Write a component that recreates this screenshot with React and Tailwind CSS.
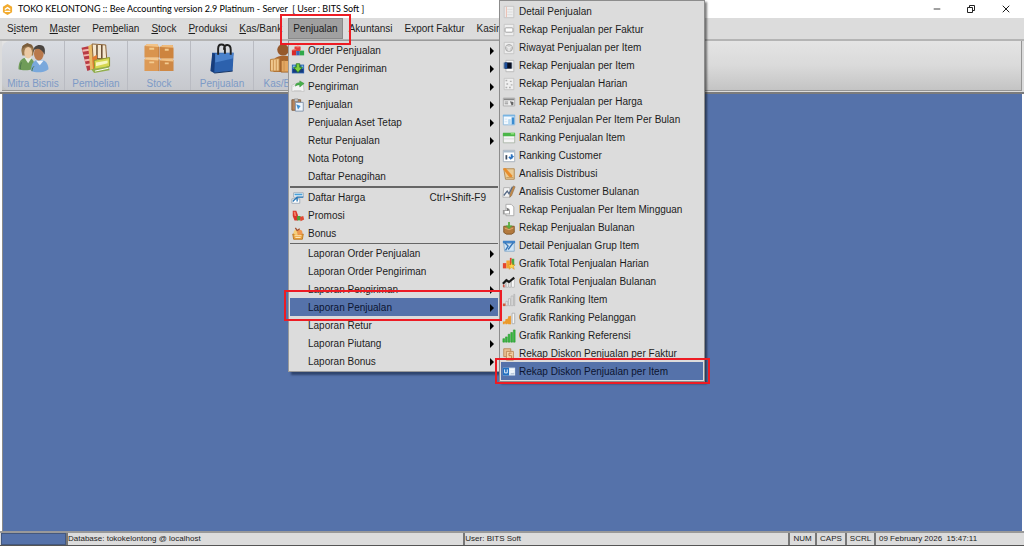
import { Minus, X } from "lucide-react";

const ICONS = {
  cubes: (
    <>
      <path d="M4 3l4-1 3 1v5H4z" fill="#e0403c" />
      <path d="M4 3l4-1 3 1-3 1z" fill="#f58a80" />
      <path d="M1 7h5v6H1z" fill="#d92a2a" />
      <path d="M1 7l1-1h4v1z" fill="#f27a70" />
      <path d="M6 8h4v5H6z" fill="#3b66b8" />
      <path d="M10 8h5v5h-5z" fill="#2fa84a" />
      <path d="M10 8l1-1h4v1z" fill="#7fd08a" />
    </>
  ),
  orderShip: (
    <>
      <path d="M1 3h14v10H1z" fill="#2a5fae" />
      <path d="M2 8h12v4H2z" fill="#173b7c" />
      <path d="M2 4h3v3H2zM12 4h2v3h-2z" fill="#7fc4ee" />
      <path d="M6 2h4v4h3l-5 6-5-6h3z" fill="#7fcf3c" stroke="#2c7d2a" />
    </>
  ),
  ship: (
    <>
      <path d="M1 6l4-2h9l1 9H1z" fill="#f4f4f4" stroke="#c4c4c4" />
      <path d="M2 8l3-3h3M3 12h9" fill="none" stroke="#d0d0d0" />
      <path d="M5 7C5 4 7 3 10 3V1l5 3-5 4V6C8 5 7 6 5 7z" fill="#48b04a" stroke="#2d8833" strokeWidth=".5" />
    </>
  ),
  clipboard: (
    <>
      <path d="M1 2h10v12H1z" fill="#b5835a" stroke="#7c5a3d" />
      <path d="M4 1h4v3H4z" fill="#c9c9c9" stroke="#777" strokeWidth=".6" />
      <path d="M5 5h9v10H5z" fill="#eef4fa" stroke="#7c8fa8" />
      <path d="M6 7l5 2-3 4z" fill="#3f8fd0" />
    </>
  ),
  price: (
    <>
      <path d="M3 2h11v5H3zM1 9h9v5H1z" fill="#fff" stroke="#9aa7b5" />
      <path d="M4 3h9v2H4z" fill="#49a0d8" />
      <path d="M2 12l5-5h7M7 7v5" fill="none" stroke="#2878b8" strokeWidth="1.5" />
    </>
  ),
  promo: (
    <>
      <path d="M2 2h4l2 5v6H4L2 8z" fill="#d8362a" />
      <path d="M3 3h2l1 5H4z" fill="#f4836c" />
      <path d="M7 8h4v5H7z" fill="#4aa03a" />
      <path d="M10 9l4-1 1 4-4 2z" fill="#e04a34" />
    </>
  ),
  bonus: (
    <>
      <path d="M2 8h12l-1 6H3z" fill="#eba23c" stroke="#b87622" />
      <circle cx="6" cy="6" r="3" fill="#f6cf7a" />
      <circle cx="10" cy="6" r="3" fill="#ee9850" />
      <path d="M5 1l2 3 3-2" fill="none" stroke="#a34f2c" strokeWidth="1.5" />
      <path d="M4 10h8M5 12h6" stroke="#fff1cc" />
    </>
  ),
  page: (
    <>
      <path d="M2.500 1.500h11v13h-11z" fill="#eeeeee" stroke="#c4c4c4" />
      <path d="M5 2v12" stroke="#e9b5a5" />
      <path d="M6 5h6M6 8h6M6 11h6" stroke="#dadada" />
    </>
  ),
  field: (
    <>
      <path d="M2.500 1.500h11v13h-11z" fill="#efefef" stroke="#c4c4c4" />
      <rect x="3.500" y="5.500" width="9" height="5" rx="1" fill="#fff" stroke="#999" />
    </>
  ),
  history: (
    <>
      <path d="M2.500 1.500h11v13h-11z" fill="#ededed" stroke="#c4c4c4" />
      <circle cx="8" cy="8" r="4" fill="#d4d4d4" stroke="#a2a2a2" />
      <path d="M5 6l3 2 3-2M8 8v4" fill="none" stroke="#f5f5f5" />
    </>
  ),
  itemDark: (
    <>
      <path d="M4.500 1.500h9v13h-9z" fill="#f7f7f7" stroke="#b7b7b7" />
      <path d="M1 4h11v7H1z" fill="#a5b4c4" />
      <path d="M3 4h8v7H3z" fill="#080f22" />
      <path d="M3 4h3v7H3z" fill="#1b4f9c" />
    </>
  ),
  daily: (
    <>
      <path d="M2.500 1.500h11v13h-11z" fill="#efefef" stroke="#c4c4c4" />
      <path d="M4 4h2M9 5h2M5 8h2M10 9h2M4 12h2M8 12h2" stroke="#b0b0b0" strokeWidth="1.500" />
    </>
  ),
  tag: (
    <>
      <path d="M1.500 3.500h13v9h-13z" fill="#eee" stroke="#aaa" />
      <path d="M2 4h12v2H2z" fill="#888" />
      <path d="M3 8h4M3 10h4" stroke="#888" />
      <path d="M9 7l4 1v3l-2 1z" fill="#666" />
    </>
  ),
  average: (
    <>
      <path d="M1.500 2.500h13v11h-13z" fill="#f4faff" stroke="#8bb8dc" />
      <path d="M1 2h14v2H1z" fill="#78b4e2" />
      <path d="M7 7h3v6H7z" fill="#b9daf2" />
      <path d="M11 5h3v8h-3z" fill="#3a8cd0" />
      <path d="M3 7h3M3 10h3" stroke="#cfe2f2" />
    </>
  ),
  tableGreen: (
    <>
      <path d="M1.500 3.500h13v10h-13z" fill="#f5f5f5" stroke="#a9b5a6" />
      <path d="M1 2h14v4H1z" fill="#4bb648" />
      <path d="M10 2h4v2h-4z" fill="#8ce07c" />
      <path d="M2 9h12" stroke="#d6d6d6" />
    </>
  ),
  rankCustomer: (
    <>
      <path d="M1.500 1.500h13v13h-13z" fill="#fff" stroke="#a0acb8" />
      <path d="M2 2h12v2H2z" fill="#a9bccd" />
      <path d="M4 7h2v5H4z" fill="#3f4c5e" />
      <path d="M11 6v5M8 9l2 2 3-3" fill="none" stroke="#2c72be" strokeWidth="2" />
    </>
  ),
  distribution: (
    <>
      <path d="M2 2h12v12H4z" fill="#eacb96" stroke="#ae834c" />
      <path d="M1 2l3-1 8 9-1 2-3-1z" fill="#e88d2c" />
      <path d="M5 12h8" stroke="#c39a60" />
    </>
  ),
  monthly: (
    <>
      <path d="M2 3h7v11H1z" fill="#f2f2f2" stroke="#b0b0b0" />
      <path d="M2 12l4-5 2 3 4-8" fill="none" stroke="#566985" strokeWidth="1.500" />
      <path d="M13 1l2 1-4 10-2 2v-3z" fill="#c98c46" stroke="#6c563e" strokeWidth=".5" />
    </>
  ),
  weekly: (
    <>
      <path d="M4.500 1.500h6l3 3v10h-9z" fill="#fdfdfd" stroke="#a6a6a6" />
      <path d="M1 8h8v5H1z" fill="#999" />
      <path d="M3 9h5v3H3z" fill="#fff" />
      <path d="M5 5l4 2-3 2z" fill="#777" />
    </>
  ),
  sack: (
    <>
      <path d="M2 6h12v7l-3 2H5l-3-2z" fill="#b37a3e" stroke="#7e5326" />
      <path d="M3 8l5 2 5-2" stroke="#dfb171" fill="none" />
      <path d="M7 1h2v4h3L8 9 4 5h3z" fill="#58ac3c" />
    </>
  ),
  group: (
    <>
      <path d="M1 2h14v3H1z" fill="#3e82c8" />
      <path d="M2 5h12v9H3z" fill="#cfe4f5" stroke="#89acc9" />
      <path d="M3 4l4 4-3 5M13 4L7 12" stroke="#3575b8" strokeWidth="1.500" fill="none" />
    </>
  ),
  chartStar: (
    <>
      <path d="M1 7h4v6H1z" fill="#e5452d" />
      <path d="M5 4h4v9H5z" fill="#f2a42d" />
      <path d="M9 1h2v9H9z" fill="#e5452d" />
      <path d="M11 2h3v8h-3z" fill="#4ca441" />
      <path d="M11 6l1 3h3l-2 2 1 3-3-2-3 2 1-3-2-2h3z" fill="#ffd84a" stroke="#d4861e" strokeWidth=".6" />
    </>
  ),
  chartDark: (
    <>
      <path d="M2 10h2v4H2zM5 8h2v6H5zM8 8h2v6H8zM11 5h3v9h-3z" fill="#fff" stroke="#999" strokeWidth=".6" />
      <path d="M1 10l4-4 3 2 6-5" fill="none" stroke="#181818" strokeWidth="2.500" />
      <path d="M1 11h2v3H1z" fill="#cf5143" />
    </>
  ),
  barsGray: (
    <>
      <path d="M4.500 9.500h2v5h-2zM7.500 6.500h2v8h-2zM10.500 3.500h2v11h-2zM13.500 1.500h1v13h-1z" fill="#f3f3f3" stroke="#a9a9a9" strokeWidth=".8" />
      <path d="M1 12h3v3H1z" fill="#cf5a3e" />
    </>
  ),
  barsOrange: (
    <>
      <path d="M1 12h2v3H1zM4 9h2v6H4zM7 6h3v9H7z" fill="#eb9a2c" />
      <path d="M1 14L10 5v10z" fill="#eb9a2c" />
      <path d="M11.500 2.500h3v12h-3z" fill="#f6f6f6" stroke="#adadad" />
    </>
  ),
  barsGreen: (
    <path d="M1 11h2v4H1zM4 9h2v6H4zM7 6h2v9H7zM10 4h2v11h-2zM13 1h2v14h-2z" fill="#35bb3c" stroke="#24932c" strokeWidth=".6" />
  ),
  discount: (
    <>
      <path d="M2 2h8v9H2z" fill="#eac193" stroke="#b98452" />
      <path d="M5 5h8v10H5z" fill="#f4d4ab" stroke="#b98452" />
      <path d="M11 7H8v3h3v3H7" fill="none" stroke="#b5763c" />
    </>
  ),
  discountItem: (
    <>
      <path d="M1 3h14v9H1z" fill="#dfeaf5" />
      <path d="M1 3h7v9H1z" fill="#2371c2" />
      <path d="M3 5v4h3V5M9 5h5M9 7h5M9 9h4" fill="none" stroke="#fff" />
      <path d="M10 10h4" stroke="#9fb4cc" />
    </>
  ),
};

const MENUS = [
  { before: "S", key: "i", after: "stem" },
  { before: "", key: "M", after: "aster" },
  { before: "Pem", key: "b", after: "elian" },
  { before: "", key: "S", after: "tock" },
  { before: "", key: "P", after: "roduksi" },
  { before: "", key: "K", after: "as/Bank" },
];

const SALES_MENU = [
  { label: "Order Penjualan", icon: "cubes", sub: true },
  { label: "Order Pengiriman", icon: "orderShip", sub: true },
  { label: "Pengiriman", icon: "ship", sub: true },
  { label: "Penjualan", icon: "clipboard", sub: true },
  { label: "Penjualan Aset Tetap", sub: true },
  { label: "Retur Penjualan", sub: true },
  { label: "Nota Potong" },
  { label: "Daftar Penagihan" },
  { line: "thick" },
  { label: "Daftar Harga", icon: "price", shortcut: "Ctrl+Shift-F9" },
  { label: "Promosi", icon: "promo" },
  { label: "Bonus", icon: "bonus" },
  { line: "thin" },
  { label: "Laporan Order Penjualan", sub: true },
  { label: "Laporan Order Pengiriman", sub: true },
  { label: "Laporan Pengiriman", sub: true },
  { label: "Laporan Penjualan", sub: true, active: true },
  { label: "Laporan Retur", sub: true },
  { label: "Laporan Piutang", sub: true },
  { label: "Laporan Bonus", sub: true },
];

const REPORT_MENU = [
  { label: "Detail Penjualan", icon: "page" },
  { label: "Rekap Penjualan per Faktur", icon: "field" },
  { label: "Riwayat Penjualan per Item", icon: "history" },
  { label: "Rekap Penjualan per Item", icon: "itemDark" },
  { label: "Rekap Penjualan Harian", icon: "daily" },
  { label: "Rekap Penjualan per Harga", icon: "tag" },
  { label: "Rata2 Penjualan Per Item Per Bulan", icon: "average" },
  { label: "Ranking Penjualan Item", icon: "tableGreen" },
  { label: "Ranking Customer", icon: "rankCustomer" },
  { label: "Analisis Distribusi", icon: "distribution" },
  { label: "Analisis Customer Bulanan", icon: "monthly" },
  { label: "Rekap Penjualan Per Item Mingguan", icon: "weekly" },
  { label: "Rekap Penjualan Bulanan", icon: "sack" },
  { label: "Detail Penjualan Grup Item", icon: "group" },
  { label: "Grafik Total Penjualan Harian", icon: "chartStar" },
  { label: "Grafik Total Penjualan Bulanan", icon: "chartDark" },
  { label: "Grafik Ranking Item", icon: "barsGray" },
  { label: "Grafik Ranking Pelanggan", icon: "barsOrange" },
  { label: "Grafik Ranking Referensi", icon: "barsGreen" },
  { label: "Rekap Diskon Penjualan per Faktur", icon: "discount" },
  { label: "Rekap Diskon Penjualan per Item", icon: "discountItem", active: true },
];

// Toolbar pictures, drawn on a 32 x 32 grid
const PeopleIcon = () => (
  <svg viewBox="0 0 32 32" className="w-8 h-8">
    <path d="M1 27c0-8 3-12 9-12s8 5 8 11c-4 2-12 3-17 1z" fill="#6f9c58" />
    <path d="M7 15l4 6 4-6z" fill="#e9efe2" />
    <path d="M4 8c0-5 3-7 7-7s6 3 6 7l-1 5H5z" fill="#9c7a50" />
    <ellipse cx="11" cy="10" rx="4" ry="6" fill="#ecc9a4" />
    <path d="M5 7c2-4 7-5 11-1l-1-4-5-2-5 3z" fill="#7a5d3c" />
    <path d="M14 29c0-8 3-12 9-12s9 5 9 10c-5 4-13 4-18 2z" fill="#79a8dc" />
    <path d="M19 18l4 5 4-5z" fill="#eef4fb" />
    <ellipse cx="22" cy="11" rx="5" ry="7" fill="#b9794c" />
    <path d="M16 10c0-6 3-8 7-8 5 0 6 4 5 10-2-4-5-6-7-6-3 0-4 1-5 4z" fill="#4a4541" />
    <path d="M17 24c-2 2-2 4-2 5M4 20c-1 3-1 5-1 7" stroke="#49744a" fill="none" />
  </svg>
);

const BooksIcon = () => (
  <svg viewBox="0 0 32 32" className="w-8 h-8">
    <path d="M1 5l8-2 3 24-5 2z" fill="#b83b45" />
    <path d="M2 8l7-1M3 13l7-1M4 18l7-1M5 23l6-1" stroke="#f0b6b0" strokeWidth="2" />
    <path d="M8 3l4-2 2 26-4 1z" fill="#e9bb66" />
    <path d="M12 1l14 1 1 14H13z" fill="#f5e7cf" stroke="#8a6134" />
    <path d="M17 2v14M22 2v14" stroke="#5f4227" strokeWidth="1.500" />
    <path d="M12 15l5-3v10l-4 6z" fill="#e27b32" />
    <path d="M14 18l16-3v9l-15 5z" fill="#d6d850" stroke="#8b9830" />
    <path d="M16 20l12-2v3l-12 3z" fill="#f8f6c0" />
    <path d="M11 27l18-3 1 4-16 3z" fill="#92ae4c" />
    <path d="M15 29l14-3" stroke="#fff" />
  </svg>
);

const BoxesIcon = () => (
  <svg viewBox="0 0 32 32" className="w-8 h-8">
    <path d="M1 3l3-2h10l2 3v11H1z" fill="#d9944e" />
    <path d="M1 3l3-2h10l2 3z" fill="#f2c388" />
    <path d="M17 4l3-2h10l1 4v10H17z" fill="#cd843f" />
    <path d="M17 4l3-2h10l1 3z" fill="#efbb7c" />
    <path d="M1 17l2-2h12l1 2v12H1z" fill="#dd9a56" />
    <path d="M1 17l2-2h12l1 3z" fill="#f4c990" />
    <path d="M17 18l2-2h11l1 2v11H17z" fill="#ce8845" />
    <path d="M17 18l2-2h11l1 3z" fill="#f2c286" />
    <path d="M6 5h5v2H6zM22 6h4v2h-4zM6 19h5v2H6zM22 20h4v2h-4z" fill="#f3cb90" />
    <path d="M16 4v11M16 17v12" stroke="#b9753a" fill="none" />
  </svg>
);

const BagIcon = () => (
  <svg viewBox="0 0 32 32" className="w-8 h-8">
    <path d="M6 10h22l-1 19-19 2-3-2z" fill="#2c61ad" />
    <path d="M6 10l3 1-1 20-4-2z" fill="#173d7c" />
    <path d="M9 11l19-1-1 6-18 4z" fill="#4b82cc" />
    <path d="M8 31l19-2" stroke="#153463" />
    <path d="M12 12V6c0-6 7-6 7 0v5M18 7c0-7 7-6 7 0v5" fill="none" stroke="#202020" strokeWidth="2" />
  </svg>
);

const CashIcon = () => (
  <svg viewBox="0 0 32 32" className="w-8 h-8">
    <circle cx="14" cy="7" r="6" fill="#96592c" />
    <path d="M5 17c2-5 17-5 21 0l2 13H4z" fill="#a9652f" />
    <path d="M1 17l9-1v13H1z" fill="#f0c88e" stroke="#b9803e" />
    <path d="M12 18h8v12h-8z" fill="#e4a762" stroke="#a4662c" />
    <path d="M4 17v12M7 17v12M15 18v12" stroke="#c99250" />
  </svg>
);

const TOOLS = [
  { label: "Mitra Bisnis", Picture: PeopleIcon },
  { label: "Pembelian", Picture: BooksIcon },
  { label: "Stock", Picture: BoxesIcon },
  { label: "Penjualan", Picture: BagIcon },
  { label: "Kas/Bank", Picture: CashIcon },
];

function MenuIcon({ name }) {
  return (
    <svg viewBox="0 0 16 16" className="w-[14px] h-[14px] shrink-0">
      {ICONS[name]}
    </svg>
  );
}

function MenuRow({ item }) {
  return (
    <button
      role="menuitem"
      className={`flex items-center w-full h-[18px] pt-[2px] pl-[1px] pr-1 text-left ${
        item.active ? "bg-[#5572aa] text-[#0c1430]" : "hover:bg-[#5572aa]"
      }`}
    >
      <span className="flex w-[17px] shrink-0">{item.icon && <MenuIcon name={item.icon} />}</span>
      <span className="whitespace-nowrap">{item.label}</span>
      {item.shortcut && <span className="ml-auto mr-2">{item.shortcut}</span>}
      {item.sub && (
        <svg viewBox="0 0 4 8" className="ml-auto w-1 h-2">
          <path d="M0 0l4 4-4 4z" fill="#000" />
        </svg>
      )}
    </button>
  );
}

function StatusCell({ className, children }) {
  return (
    <div className={`flex items-center border-l-2 border-[#777] whitespace-nowrap ${className}`}>
      {children}
    </div>
  );
}

export default function App() {
  return (
    <div className="relative flex flex-col h-screen overflow-hidden bg-white text-[10px] leading-3 text-[#1c1c1c] font-['Liberation_Sans',Arial,sans-serif]">
      {/* Title bar */}
      <header className="flex items-center h-[18px] shrink-0 pl-[2px] pr-3 bg-white">
        <svg viewBox="0 0 12 12" className="w-[11px] h-[11px] mr-[5px]">
          <path d="M6 0l5 3v6l-5 3-5-3V3z" fill="#f2ab2e" />
          <path d="M3 6l3-2 3 2M3 8h6" fill="none" stroke="#fff" strokeWidth="1.5" />
        </svg>
        <h1 className="whitespace-pre text-[9px] text-black font-['Lato','Noto_Sans',sans-serif]">
          {"TOKO KELONTONG :: Bee Accounting version 2.9 Platinum - Server  [ User : BITS Soft ]"}
        </h1>
        <div className="flex items-center gap-6 ml-auto">
          <button aria-label="Minimize">
            <Minus className="w-[10px] h-[10px]" strokeWidth={2} />
          </button>
          <button aria-label="Restore">
            <svg viewBox="0 0 10 10" className="w-[10px] h-[10px]" fill="none" stroke="#222">
              <path d="M1.500 3.500h5v5h-5zM3.500 3V1.500h5v5H7" />
            </svg>
          </button>
          <button aria-label="Close">
            <X className="w-3 h-3" strokeWidth={2} />
          </button>
        </div>
      </header>

      {/* Menu bar */}
      <nav className="flex h-[23px] shrink-0 pl-[1px] bg-[#dcdcdc] border-b-2 border-[#b4b4b4]">
        {MENUS.map((menu) => (
          <button key={menu.before + menu.key + menu.after} className="px-[6px] pt-[1px]">
            {menu.before}
            <span className="underline">{menu.key}</span>
            {menu.after}
          </button>
        ))}
        <button className="px-1 pt-[1px] bg-[#a0a0a0] border border-[#8a8a8a]">Penjualan</button>
        <button className="px-[6px] pt-[1px]">Akuntansi</button>
        <button className="px-[6px] pt-[1px]">Export Faktur</button>
        <button className="px-[6px] pt-[1px]">Kasir</button>
      </nav>

      {/* Toolbar */}
      <div className="h-[53px] shrink-0 px-[2px] pb-[1px] bg-[#dcdcdc] border-b-2 border-[#7c7c7c]">
        <div className="flex h-full bg-linear-to-b from-[#e4e4e4] via-[#dadada] to-[#c4c4c4] border-b border-r border-[#959595]">
          <div className="flex rounded-lg overflow-hidden bg-linear-to-b from-[#d9dce2] to-[#c6c8cd]">
            {TOOLS.map(({ label, Picture }) => (
              <button
                key={label}
                className="flex flex-col items-center w-[63px] pt-[2px] gap-1 border-r border-[#b9bbc2] text-[#7d9ac6]"
              >
                <Picture />
                <span>{label}</span>
              </button>
            ))}
          </div>
        </div>
      </div>

      {/* Workspace */}
      <main className="flex-1 mx-[2px] bg-[#5572aa] border-l border-[#8a8a8a]" />

      {/* Status bar */}
      <footer className="flex h-[15px] shrink-0 bg-[#dcdcdc] border-t-2 border-b border-t-[#999] border-b-[#555] text-[8px] leading-[10px]">
        <div className="w-[65px] ml-[1px] bg-[#5572aa] border border-[#44587e]" />
        <StatusCell className="flex-[397]">Database: tokokelontong @ localhost</StatusCell>
        <StatusCell className="flex-[324]">User: BITS Soft</StatusCell>
        <StatusCell className="w-[27px] justify-center">NUM</StatusCell>
        <StatusCell className="w-[30px] justify-center">CAPS</StatusCell>
        <StatusCell className="w-[29px] justify-center">SCRL</StatusCell>
        <StatusCell className="w-[150px] pl-[3px] whitespace-pre">{"09 February 2026  15:47:11"}</StatusCell>
      </footer>

      {/* Penjualan menu */}
      <div
        role="menu"
        className="absolute left-[288px] top-10 w-[212px] px-[1px] pb-[1px] bg-[#dcdcdc] border border-[#9a9a9a] shadow-[3px_3px_2px_#2f446e]"
      >
        {SALES_MENU.map((item) =>
          item.line ? (
            <div
              key={item.line}
              className={item.line === "thick" ? "h-[3px] border-b-2 border-[#666]" : "h-[2px] border-b border-[#666]"}
            />
          ) : (
            <MenuRow key={item.label} item={item} />
          )
        )}
      </div>

      {/* Laporan Penjualan submenu */}
      <div
        role="menu"
        className="absolute left-[499px] top-0 w-[206px] px-[1px] pt-[1px] pb-[1px] bg-[#dcdcdc] border border-[#8c8c8c] shadow-[2px_2px_2px_#00000080]"
      >
        {REPORT_MENU.map((item) => (
          <MenuRow key={item.label} item={item} />
        ))}
      </div>

      {/* Red marks around the path to follow */}
      <div className="absolute left-[280px] top-[14px] w-[71px] h-[31px] border-2 border-[#ed1c24] pointer-events-none" />
      <div className="absolute left-[284px] top-[290px] w-[218px] h-[31px] border-2 border-[#ed1c24] pointer-events-none" />
      <div className="absolute left-[495px] top-[358px] w-[215px] h-[26px] border-2 border-[#ed1c24] pointer-events-none" />
    </div>
  );
}
